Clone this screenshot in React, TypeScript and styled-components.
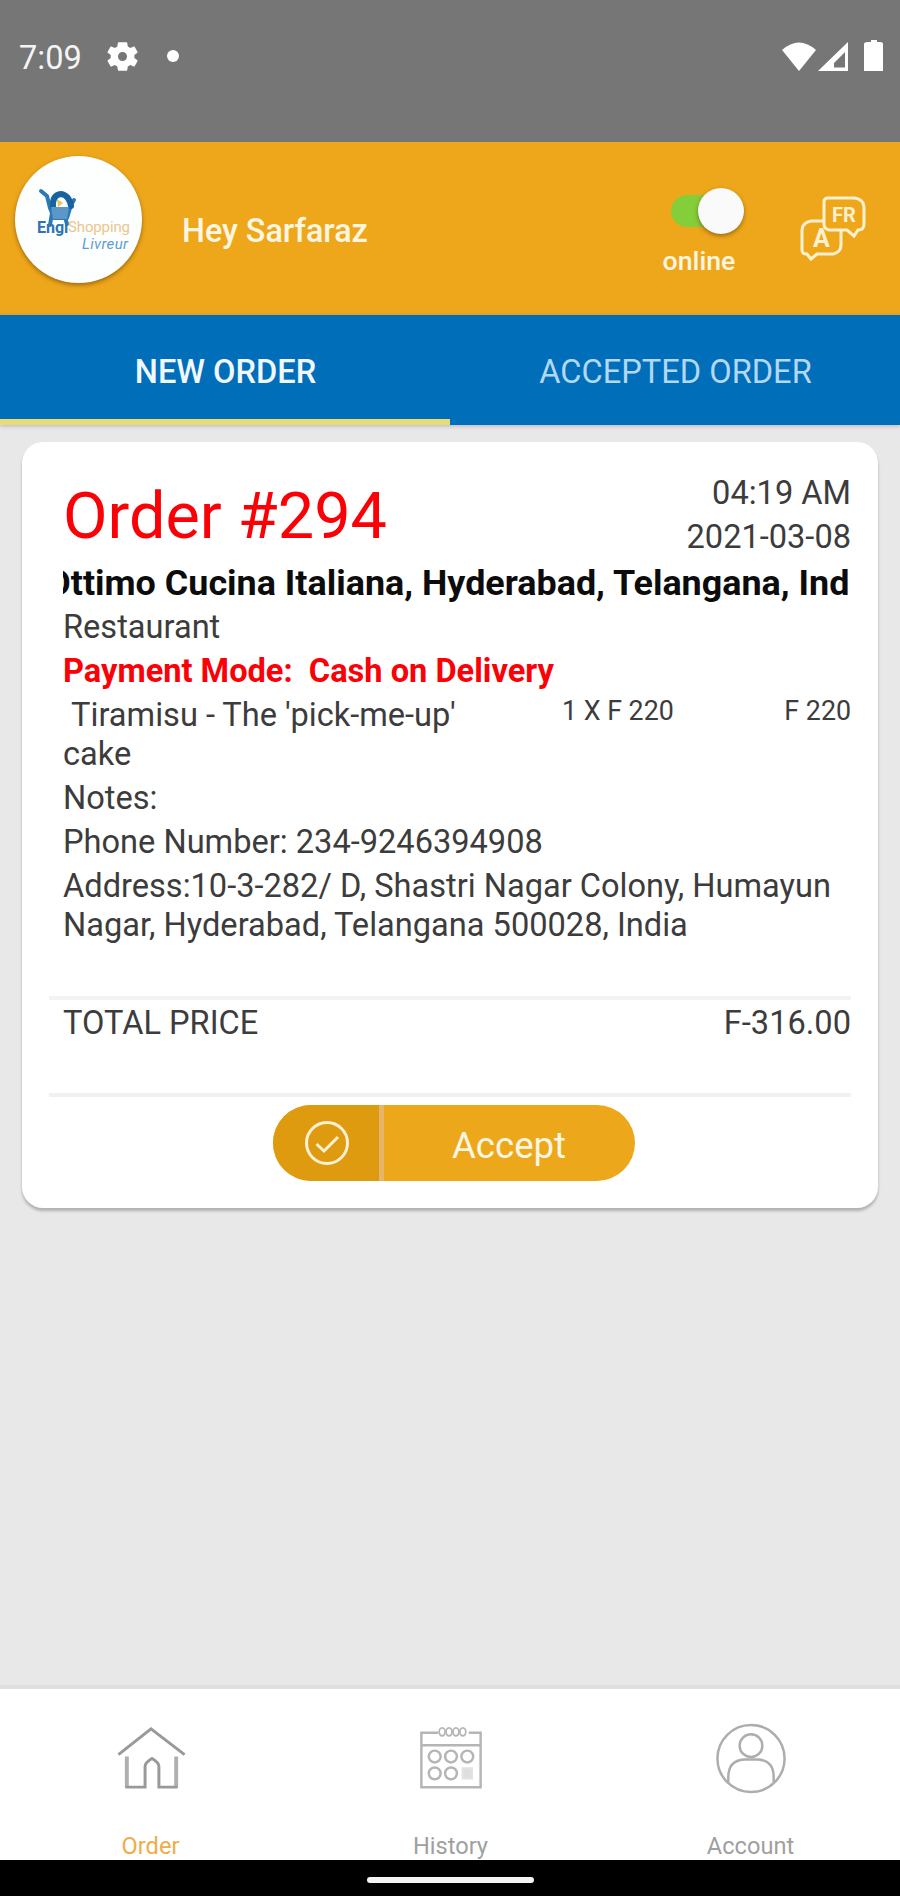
import React from 'react';
import styled, { createGlobalStyle } from 'styled-components';

const GlobalStyle = createGlobalStyle`
  * { box-sizing: border-box; }
  body {
    margin: 0;
    font-family: Roboto, 'Liberation Sans', sans-serif;
    font-size: 32.6px;
    line-height: 39px;
    color: #3c3c3c;
    background: #e8e8e8;
  }
`;

const Screen = styled.div`
  width: 900px;
  height: 1896px;
  display: flex;
  flex-direction: column;
  overflow: hidden;
  background: #e8e8e8;
`;

const StatusBar = styled.div`
  flex: none;
  height: 142px;
  padding: 37px 15px 0 19px;
  display: flex;
  align-items: flex-start;
  justify-content: space-between;
  background: #767676;
  color: #f4f4f4;
`;

const StatusGroup = styled.div`
  height: 38px;
  display: flex;
  align-items: center;
`;

const Clock = styled.span`
  width: 88px;
  padding-top: 3px;
  font-size: 32.6px;
  line-height: 38px;
`;

const Dot = styled.span`
  width: 12px;
  height: 12px;
  margin-left: 29px;
  border-radius: 50%;
  background: #fff;
`;

const Header = styled.header`
  flex: none;
  height: 173px;
  padding: 14px 33px 0 15px;
  display: flex;
  align-items: flex-start;
  background: #eea71b;
  color: #fff6e2;
`;

const Avatar = styled.div`
  width: 127px;
  height: 127px;
  border-radius: 50%;
  background: #fdfefe;
  box-shadow: 0 2px 4px rgba(90, 55, 0, 0.55);
`;

const Greeting = styled.div`
  flex: 1;
  padding: 56px 0 0 40px;
  font-size: 32.3px;
  font-weight: 500;
`;

const Availability = styled.div`
  width: 84px;
  margin-right: 54px;
  padding-top: 32px;
  display: flex;
  flex-direction: column;
  align-items: center;
`;

const Switch = styled.div`
  width: 73px;
  height: 46px;
  margin-left: 9px;
  display: flex;
  align-items: center;
  justify-content: flex-end;
`;

const Track = styled.span`
  width: 50px;
  height: 32px;
  margin-right: -23px;
  border-radius: 16px;
  background: #84ce3a;
`;

const Thumb = styled.span`
  width: 46px;
  height: 46px;
  border-radius: 50%;
  background: #fafafa;
  box-shadow: 0 2px 4px rgba(90, 55, 0, 0.55);
`;

const SwitchLabel = styled.span`
  margin-top: 12px;
  margin-right: 8px;
  font-size: 26.7px;
  line-height: 31px;
  font-weight: 500;
`;

const LanguageButton = styled.div`
  padding-top: 40px;
  display: flex;
`;

const Tabs = styled.nav`
  flex: none;
  height: 110px;
  display: flex;
  background: #006eb8;
  box-shadow: 0 1px 4px rgba(60, 60, 100, 0.3);
`;

const Tab = styled.div<{ $active?: boolean }>`
  flex: 1;
  padding: 38px 0 0 1px;
  text-align: center;
  font-size: 32.6px;
  font-weight: ${(p) => (p.$active ? 500 : 400)};
  color: ${(p) => (p.$active ? '#f1f7ff' : '#b3d8f6')};
  border-bottom: 6px solid ${(p) => (p.$active ? '#eadb74' : 'transparent')};
`;

const Main = styled.main`
  flex: 1;
  padding: 17px 22px 0;
`;

const Card = styled.article`
  height: 766px;
  padding: 31px 27px 0 41px;
  border-radius: 21px;
  background: #fff;
  box-shadow: 0 3px 3px rgba(0, 0, 0, 0.24);
`;

const CardHead = styled.div`
  height: 84px;
  padding-top: 1px;
  display: flex;
  justify-content: space-between;
`;

const OrderNumber = styled.h1`
  margin: 0;
  padding-top: 4px;
  font-size: 64.8px;
  line-height: 76px;
  font-weight: 400;
  color: #fb0007;
`;

const Stamp = styled.div`
  display: flex;
  flex-direction: column;
  gap: 5px;
  text-align: right;
`;

const RestaurantName = styled.div`
  height: 42px;
  margin: 5px 1px 4px 0;
  display: flex;
  overflow: hidden;
  white-space: nowrap;
  font-size: 35.9px;
  line-height: 42px;
  font-weight: 700;
  color: #0c0c0c;

  span {
    margin-left: -17px;
  }
`;

const Details = styled.div`
  display: flex;
  flex-direction: column;
  gap: 5px;
`;

const PaymentMode = styled.div`
  white-space: pre;
  font-weight: 700;
  color: #fb0007;
`;

const Item = styled.div`
  height: 78px;
  display: grid;
  grid-template-columns: 499px 1fr auto;
`;

const ItemName = styled.div`
  padding-right: 80px;
  white-space: pre-wrap;
`;

const ItemFigure = styled.div`
  font-size: 26.8px;
  line-height: 31px;
`;

const TotalRow = styled.div`
  height: 101px;
  margin: 51px 0 0 -14px;
  padding: 4px 0 0 14px;
  display: flex;
  justify-content: space-between;
  border-top: 4px solid #f3f3f3;
  border-bottom: 4px solid #f1f1f1;
`;

const AcceptButton = styled.button`
  width: 362px;
  height: 76px;
  margin: 8px 0 0 210px;
  padding: 0;
  display: flex;
  overflow: hidden;
  border: 0;
  border-radius: 38px;
  background: #eda71b;
  color: #fff6e4;
  font: 400 36.6px/43px Roboto, sans-serif;
`;

const AcceptIcon = styled.span`
  width: 111px;
  height: 76px;
  padding-left: 31px;
  display: flex;
  align-items: center;
  background: #df9b10;
  border-right: 5px solid #e8b468;
`;

const AcceptText = styled.span`
  flex: 1;
  padding: 19px 0 0 68px;
  text-align: left;
`;

const BottomNav = styled.nav`
  flex: none;
  height: 175px;
  display: flex;
  border-top: 4px solid #dfdfdf;
  background: #fff;
`;

const NavItem = styled.div<{ $active?: boolean }>`
  flex: 1;
  padding: 32px 0 0 1px;
  display: flex;
  flex-direction: column;
  align-items: center;
  font-size: 23.6px;
  line-height: 28px;
  color: ${(p) => (p.$active ? '#efac48' : '#a0a0a0')};

  svg {
    height: 78px;
    margin-bottom: 34px;
  }
`;

const GestureBar = styled.div`
  flex: none;
  height: 36px;
  display: flex;
  align-items: center;
  justify-content: center;
  background: #000;
`;

const GesturePill = styled.span`
  width: 167px;
  height: 6px;
  margin-top: 3px;
  border-radius: 3px;
  background: #f4f4f4;
`;

const GearIcon = () => (
  <svg width="31" height="31" viewBox="0 0 24 24" fill="#fff">
    <path fillRule="evenodd" d="M21.2 13.1a9.5 9.5 0 0 0 0-2.2l2.3-1.8c.2-.2.3-.5.1-.8l-2.2-3.8c-.1-.2-.4-.3-.7-.2l-2.7 1.1a8 8 0 0 0-1.9-1.1L15.7 1.5a.6.6 0 0 0-.6-.5H9a.6.6 0 0 0-.6.5L8 4.3a8 8 0 0 0-1.9 1.1L3.4 4.3c-.3-.1-.6 0-.7.2L.5 8.3c-.2.3-.1.6.1.8l2.3 1.8a9.5 9.5 0 0 0 0 2.2L.6 14.9c-.2.2-.3.5-.1.8l2.2 3.8c.1.2.4.3.7.2l2.7-1.1c.6.5 1.2.8 1.9 1.1l.4 2.8c0 .3.3.5.6.5h6.1c.3 0 .6-.2.6-.5l.4-2.8c.7-.3 1.3-.6 1.9-1.1l2.7 1.1c.3.1.6 0 .7-.2l2.2-3.8c.2-.3.1-.6-.1-.8zM12 15.5a3.5 3.5 0 1 1 0-7 3.5 3.5 0 0 1 0 7z" />
  </svg>
);

const SignalIcons = () => (
  <svg width="104" height="34" viewBox="0 0 104 34" fill="#fff">
    <path d="M1 11Q18-4 35 11L18 32z" />
    <path fillRule="evenodd" d="M67 3V32H37zM64 13L53 24V28.5H64z" />
    <path d="M87 3h3V1h6v2h3q3 0 3 2v27H83V5q0-2 4-2z" />
  </svg>
);

const BrandLogo = () => (
  <svg width="127" height="127" viewBox="0 0 127 127">
    <g fill="none" stroke="#2f78b4" strokeLinecap="round" strokeLinejoin="round">
      <path d="M26 35l6 5 3 12 4 10h13l4-13 3-5" strokeWidth="4" />
      <path d="M37 57l-2 12M49 57l3 11" strokeWidth="4" />
      <path d="M38 51q-1-12 8-13 8 1 10 12" strokeWidth="6" stroke="#17639f" />
    </g>
    <path d="M36 51h18l-2 12H38z" fill="#5b97c9" />
    <path d="M42 43l6 4-5 4z" fill="#e6c65a" />
    <text x="22" y="77" fontFamily="Roboto" fontSize="16" fontWeight="700" fill="#2e74b1">Engi</text>
    <text x="53" y="76" fontFamily="Roboto" fontSize="15" textLength="62" fill="#ecc68c">Shopping</text>
    <text x="67" y="93" fontFamily="Roboto" fontSize="15" fontStyle="italic" textLength="46" fill="#5b9fd3">Livreur</text>
  </svg>
);

const TranslateIcon = () => (
  <svg width="68" height="66" viewBox="0 0 68 66" fill="none" stroke="#fff0d0" strokeWidth="3">
    <path d="M25 25V6q0-4 4-4h27q9 2 9 9v17q0 6-6 6l-4 6-7-6H30q-5-1-5-6z" />
    <path d="M25 25H12q-9 2-9 9v20q0 4 5 4l4 5 6-5h16q8-2 8-9V34" />
    <text x="45" y="26" textAnchor="middle" fontFamily="Roboto" fontSize="20" fontWeight="700" fill="#fff0d0" stroke="none">FR</text>
    <text x="22.5" y="51" textAnchor="middle" fontFamily="Roboto" fontSize="25" fontWeight="700" fill="#fff0d0" stroke="none">A</text>
  </svg>
);

const CheckIcon = () => (
  <svg width="46" height="46" viewBox="0 0 46 46" fill="none" stroke="#fff0d4" strokeWidth="3">
    <circle cx="23" cy="23" r="20.5" />
    <path d="M12.5 24l7.5 7 14-14" />
  </svg>
);

const HomeIcon = () => (
  <svg width="72" height="78" viewBox="0 0 72 78" fill="none" stroke="#999" strokeWidth="3">
    <path d="M3 34L36 8l34 26" />
    <path strokeWidth="4" d="M11.5 36v31M61.5 36v31" stroke="#b0b0b0" />
    <path d="M10 67h20V46q0-4 7-8 7 4 7 8v21h19" />
  </svg>
);

const CalendarIcon = () => (
  <svg width="64" height="78" viewBox="0 0 64 78" fill="none" stroke="#b5b5b5" strokeWidth="2.5">
    <path d="M19 12H2v55h60V12H50M2 24.5h60" />
    <g strokeWidth="1.8">
      <ellipse cx="23" cy="11" rx="3" ry="4" />
      <ellipse cx="30" cy="11" rx="3" ry="4" />
      <ellipse cx="37" cy="11" rx="3" ry="4" />
      <ellipse cx="44" cy="11" rx="3" ry="4" />
    </g>
    <circle cx="15.5" cy="36" r="6" />
    <circle cx="32" cy="36" r="6" />
    <circle cx="48.5" cy="36" r="6" />
    <circle cx="15.5" cy="53" r="6" />
    <circle cx="32" cy="53" r="6" />
    <path d="M44 48h9v10h-9z" fill="#dedede" stroke="#e2e2e2" />
  </svg>
);

const AccountIcon = () => (
  <svg width="72" height="78" viewBox="0 0 72 78" fill="none" stroke="#adadad" strokeWidth="2.5">
    <circle cx="36" cy="38" r="34" />
    <circle cx="36" cy="25" r="11.5" />
    <path d="M13 62V57q0-17 16-18h14q16 1 16 18v5" />
  </svg>
);

export default function App() {
  return (
    <>
      <GlobalStyle />
      <Screen>
        <StatusBar>
          <StatusGroup>
            <Clock>7:09</Clock>
            <GearIcon />
            <Dot />
          </StatusGroup>
          <StatusGroup>
            <SignalIcons />
          </StatusGroup>
        </StatusBar>

        <Header>
          <Avatar>
            <BrandLogo />
          </Avatar>
          <Greeting>Hey Sarfaraz</Greeting>
          <Availability>
            <Switch>
              <Track />
              <Thumb />
            </Switch>
            <SwitchLabel>online</SwitchLabel>
          </Availability>
          <LanguageButton>
            <TranslateIcon />
          </LanguageButton>
        </Header>

        <Tabs>
          <Tab $active>NEW ORDER</Tab>
          <Tab>ACCEPTED ORDER</Tab>
        </Tabs>

        <Main>
          <Card>
            <CardHead>
              <OrderNumber>Order #294</OrderNumber>
              <Stamp>
                <span>04:19 AM</span>
                <span>2021-03-08</span>
              </Stamp>
            </CardHead>
            <RestaurantName>
              <span>Ottimo Cucina Italiana, Hyderabad, Telangana, Ind</span>
            </RestaurantName>
            <Details>
              <div>Restaurant</div>
              <PaymentMode>{'Payment Mode:  Cash on Delivery'}</PaymentMode>
              <Item>
                <ItemName>{" Tiramisu - The 'pick-me-up' cake"}</ItemName>
                <ItemFigure>1 X F 220</ItemFigure>
                <ItemFigure>F 220</ItemFigure>
              </Item>
              <div>Notes:</div>
              <div>Phone Number: 234-9246394908</div>
              <div>Address:10-3-282/ D, Shastri Nagar Colony, Humayun Nagar, Hyderabad, Telangana 500028, India</div>
            </Details>
            <TotalRow>
              <span>TOTAL PRICE</span>
              <span>F-316.00</span>
            </TotalRow>
            <AcceptButton>
              <AcceptIcon>
                <CheckIcon />
              </AcceptIcon>
              <AcceptText>Accept</AcceptText>
            </AcceptButton>
          </Card>
        </Main>

        <BottomNav>
          <NavItem $active>
            <HomeIcon />
            Order
          </NavItem>
          <NavItem>
            <CalendarIcon />
            History
          </NavItem>
          <NavItem>
            <AccountIcon />
            Account
          </NavItem>
        </BottomNav>
        <GestureBar>
          <GesturePill />
        </GestureBar>
      </Screen>
    </>
  );
}
